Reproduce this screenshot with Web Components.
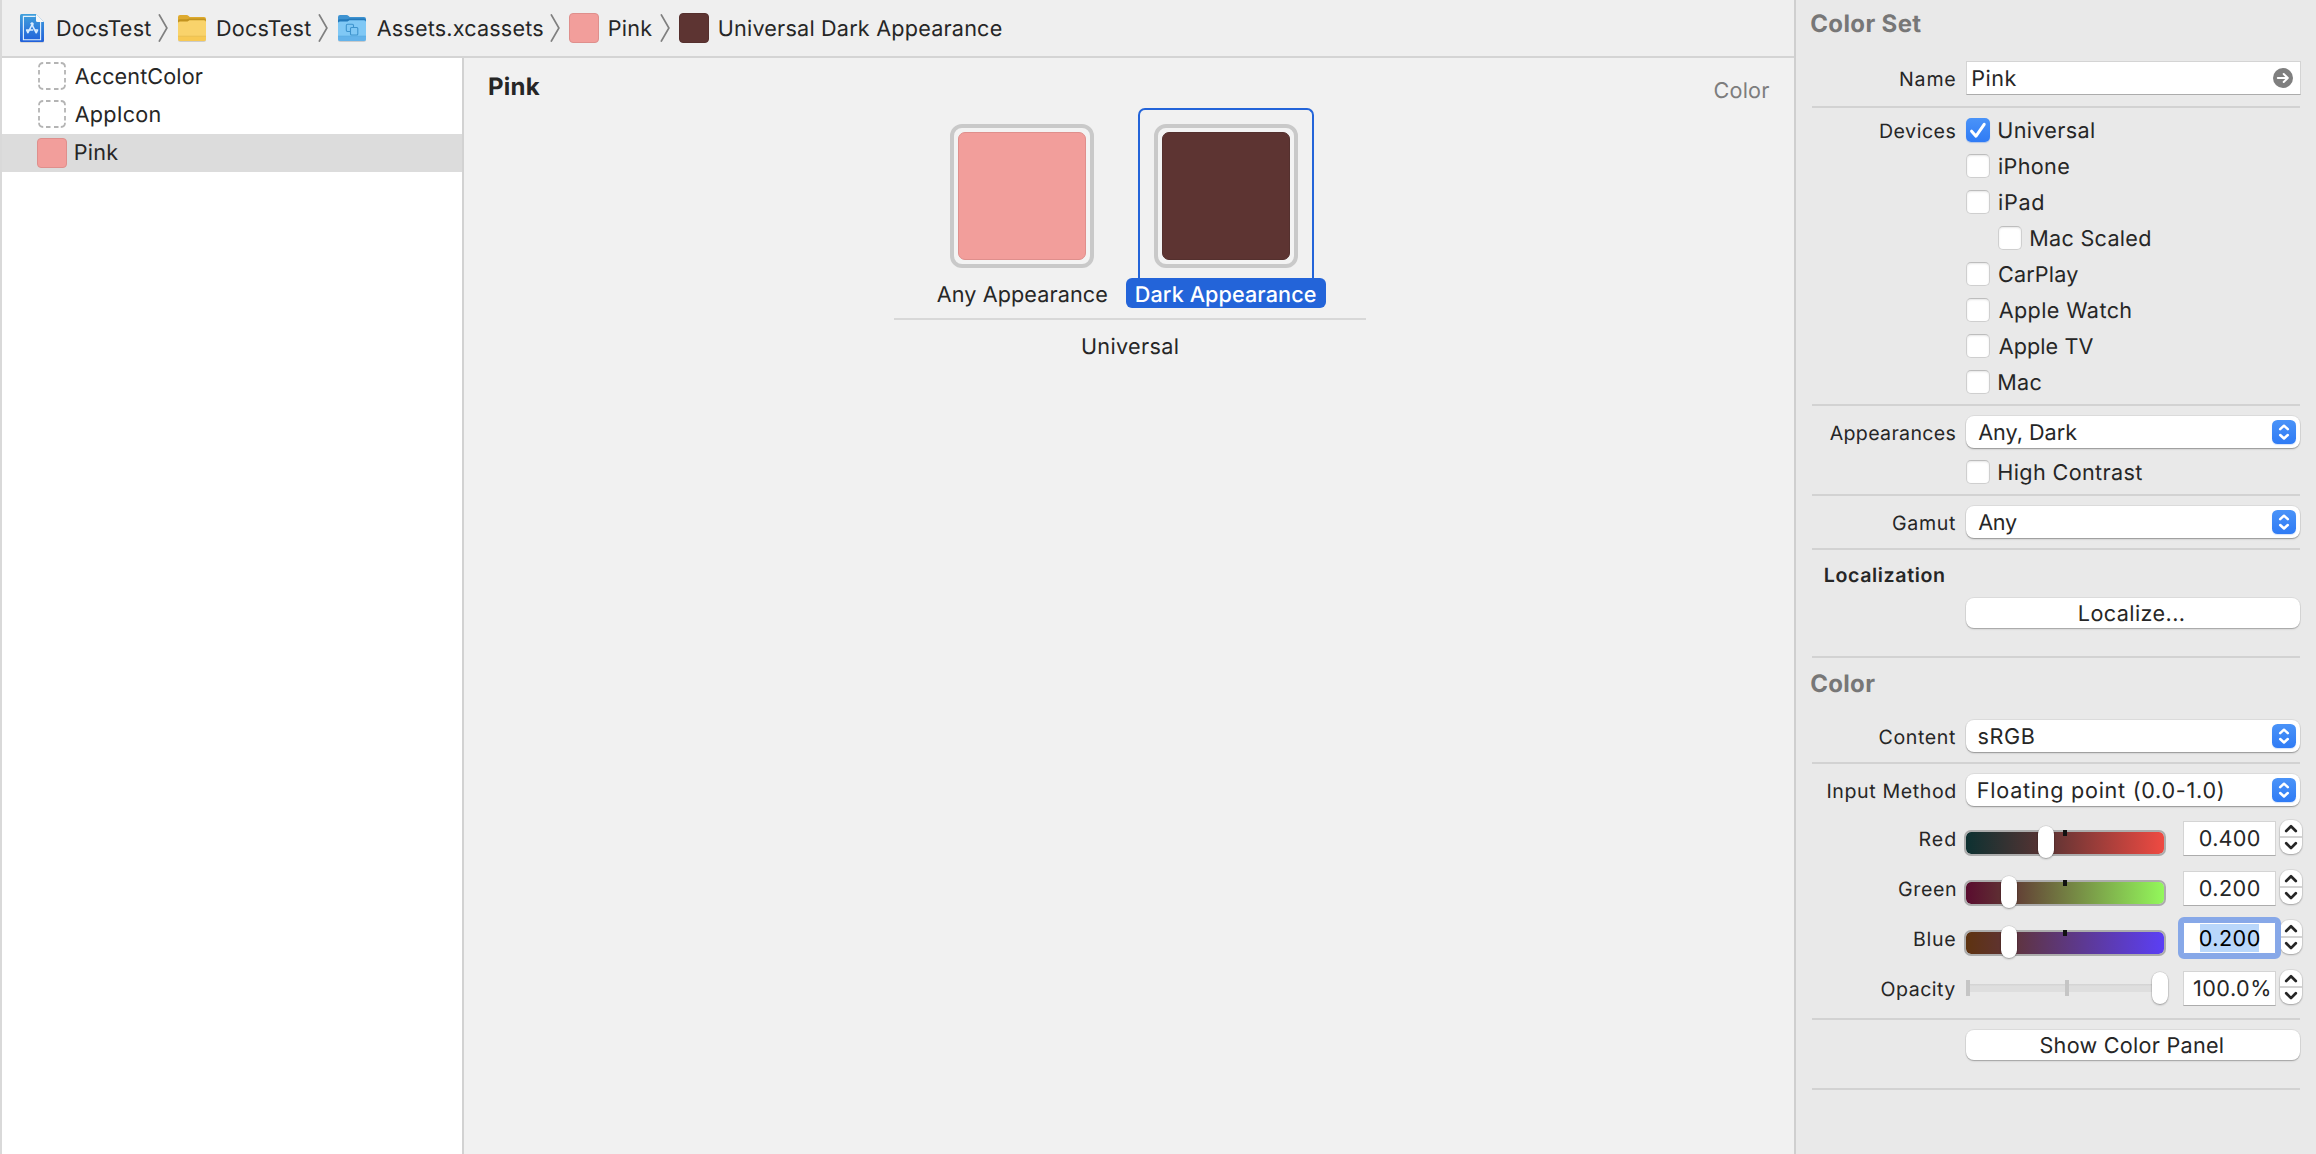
<!DOCTYPE html>
<html lang="en">
<head>
<meta charset="utf-8">
<title>Assets.xcassets</title>
<style>
  html, body { margin: 0; height: 100%; overflow: hidden; }
  body { font-family: Inter, "Liberation Sans", sans-serif; color: #262626; background: #f1f1f1; }
</style>
</head>
<body>
<asset-window></asset-window>
<script>
const define = (name, css, html, init) => {
  const template = document.createElement('template');
  template.innerHTML = `<style>:host{box-sizing:border-box}*{box-sizing:border-box}${css}</style>${html}`;
  customElements.define(name, class extends HTMLElement {
    connectedCallback() {
      if (this.shadowRoot) return;
      this.attachShadow({ mode: 'open' }).append(template.content.cloneNode(true));
      if (init) init(this, this.shadowRoot);
    }
  });
};

/* Text whose glyphs are tracked to fill the width w, side bearings excluded */
const ctx = document.createElement('canvas').getContext('2d');
ctx.textRendering = 'geometricPrecision';
define('ui-text', `
  :host { display: block; flex: none; white-space: nowrap; text-rendering: geometricPrecision; height: 24px; line-height: var(--lh, 26px); }
  span { display: inline-block; }`,
  `<span><slot></slot></span>`, (el, root) => {
    const text = el.textContent, size = el.getAttribute('size') || 21.6, weight = el.getAttribute('weight') || 400;
    const w = +el.getAttribute('w'), family = 'Inter, "Liberation Sans", sans-serif';
    ctx.font = `${weight} ${size * 20}px ${family}`;
    const big = ctx.measureText(text);
    const left = -big.actualBoundingBoxLeft / 20;
    const right = (big.width - big.actualBoundingBoxRight) / 20;
    ctx.font = `${weight} ${size}px ${family}`;
    const ink = ctx.measureText(text).width - left - right;
    if (el.hasAttribute('size')) el.style.lineHeight = '24px';
    el.style.width = w + 'px';
    el.style.fontSize = size + 'px';
    el.style.fontWeight = weight;
    el.style.letterSpacing = ((w - ink) / (text.length - 1)).toFixed(3) + 'px';
    root.querySelector('span').style.marginLeft = (-left).toFixed(2) + 'px';
  });

define('color-swatch', `
  :host { display: block; flex: none; width: 30px; height: 30px; border-radius: 4px; background: var(--c);
    border: 1px solid var(--e); }`, ``);

define('empty-slot', `:host { display: block; width: 28px; height: 28px; } svg { display: block; }`,
  `<svg width="28" height="28" fill="none" stroke="#b4b4b4" stroke-width="1.8">
    <path d="M1 5.2Q1 1 5.2 1M22.8 1Q27 1 27 5.2M27 22.8Q27 27 22.8 27M5.2 27Q1 27 1 22.8"/>
    <path d="M8 1h4.5M16 1h4.5M8 27h4.5M16 27h4.5M1 8v4.5M1 16v4.5M27 8v4.5M27 16v4.5"/></svg>`);

define('crumb-chevron', `:host { display: block; flex: none; width: 10px; height: 28px; } svg { display: block; }`,
  `<svg width="10" height="28" fill="none" stroke="#808080" stroke-width="1.7"><path d="M1 .3L8.9 14L1 27.7"/></svg>`);

define('project-icon', `:host { display: block; flex: none; width: 24px; height: 30px; } svg { display: block; overflow: visible; }`,
  `<svg width="24" height="30">
    <defs><linearGradient id="g" x2="0" y2="1"><stop stop-color="#40a0dc"/><stop offset="1" stop-color="#2160da"/></linearGradient></defs>
    <path d="M1.5 1H16L24 9V27.5Q24 29 22.5 29H1.5Q0 29 0 27.5V2.5Q0 1 1.5 1Z" fill="#999" opacity=".4" transform="translate(0 .8)"/>
    <path d="M1.5 1H16L24 9V27.5Q24 29 22.5 29H1.5Q0 29 0 27.5V2.5Q0 1 1.5 1Z" fill="url(#g)"/>
    <path d="M15.6 3.4H3.4V26.7H20.6V8.6" fill="none" stroke="#e4f1fb" stroke-width="1.1"/>
    <path d="M16 1L24 9H17.5Q16 9 16 7.5Z" fill="#f7f7f7"/>
    <g fill="none" stroke="#d9ecff" stroke-width="1.5" stroke-linecap="round" stroke-linejoin="round">
      <path d="M8 19.6L12.6 10.6M11 10.6Q12 9.2 13 10.6L12.6 12.8L16.2 19.8M6.6 17H12.6M15.4 17H17.6M6.6 17L7.8 19.6M17.6 17L16.4 19.8"/></g>
  </svg>`);

define('folder-icon', `:host { display: block; flex: none; width: 28px; height: 28px; } svg { display: block; overflow: visible; }
  .mark { display: none; } :host([assets]) .mark { display: inline; }`,
  `<svg width="28" height="28">
    <path d="M0 6H28V25.5Q28 28 25.5 28H2.5Q0 28 0 25.5Z" fill="#000" opacity=".15"/>
    <path d="M0 3Q0 1 2 1H8.5Q9.7 1 10.7 2L11.7 3H26Q28 3 28 5V12H0Z" style="fill:var(--tab)"/>
    <path d="M0 6.2Q.3 5.5 2 5.3H8.5Q10 5.3 11.2 4.6H26Q28 4.6 28 6.5V12H0Z" style="fill:var(--dark)"/>
    <path d="M0 9Q0 7.5 2 7.5H9.500L11.5 6.3H26Q28 6.3 28 8V25Q28 27 26 27H2Q0 27 0 25Z" style="fill:var(--body)"/>
    <path d="M0 22.5H28V25Q28 27 26 27H2Q0 27 0 25Z" style="fill:var(--foot)"/>
    <path d="M0 22.2H28" style="stroke:var(--line)" stroke-width=".7"/>
    <g class="mark" fill="none" stroke="#3d93cd" stroke-width="1.1"><path d="M12.5 17.5H9.5Q8.300 17.5 8.300 16.3V11.5Q8.300 10.3 9.500 10.3H14.300Q15.500 10.3 15.500 11.500V13.5"/><rect x="12.500" y="13.500" width="7.300" height="7.500" rx="1"/></g>
  </svg>`);

define('path-bar', `
  :host { display: flex; align-items: center; height: 58px; padding: 0 0 0 18px; background: #efefef; border-bottom: 2px solid #d4d4d4; }
  .y { --tab:#deaa2e; --dark:#c2931f; --body:#f9d36b; --foot:#f7c954; --line:#e3b84a; }
  .b { --tab:#3e93d1; --dark:#2379ba; --body:#80c8f5; --foot:#64b3ea; --line:#4ea3dc; }`,
  `<project-icon></project-icon>
   <ui-text w="93.3" style="margin-left:13.700px">DocsTest</ui-text>
   <crumb-chevron style="margin-left:7.300px"></crumb-chevron>
   <folder-icon class="y" style="margin-left:9.700px"></folder-icon>
   <ui-text w="93.3" style="margin-left:11.700px">DocsTest</ui-text>
   <crumb-chevron style="margin-left:7px"></crumb-chevron>
   <folder-icon class="b" assets style="margin-left:10px"></folder-icon>
   <ui-text w="165.7" style="margin-left:11px">Assets.xcassets</ui-text>
   <crumb-chevron style="margin-left:7.300px"></crumb-chevron>
   <color-swatch style="margin-left:9px;--c:#f29e9b;--e:#df8f8c"></color-swatch>
   <ui-text w="42.5" style="margin-left:10.500px">Pink</ui-text>
   <crumb-chevron style="margin-left:8.500px"></crumb-chevron>
   <color-swatch style="margin-left:8.500px;--c:#5d3432;--e:#552f2d"></color-swatch>
   <ui-text w="282" style="margin-left:10.500px">Universal Dark Appearance</ui-text>`);

define('asset-row', `
  :host { display: flex; align-items: center; height: 38px; --lh: 24px; }
  :host([selected]) { background: #dcdcdc; }
  .icon { width: 73px; flex: none; display: flex; padding-left: 36px; }`,
  `<div class="icon"><slot name="icon"></slot></div><slot></slot>`);

define('asset-list', `:host { display: block; flex: none; width: 462px; background: #fff; border-right: 2px solid #d2d2d2; }`,
  `<asset-row><empty-slot slot="icon" style="margin-top:-2px"></empty-slot><ui-text w="127.500">AccentColor</ui-text></asset-row>
   <asset-row><empty-slot slot="icon" style="margin-top:-2px"></empty-slot><ui-text w="84.500">AppIcon</ui-text></asset-row>
   <asset-row selected><color-swatch slot="icon" style="margin:-1px 0 0 -1px;--c:#f29e9b;--e:#df8f8c"></color-swatch><ui-text w="42.500" style="margin-left:.500px">Pink</ui-text></asset-row>`);

define('color-well', `
  :host { display: flex; flex-direction: column; align-items: center; width: 200px; }
  .frame { width: 176px; height: 170px; padding: 14px; border: 2px solid transparent; border-bottom: 0; border-radius: 7px 7px 0 0; }
  .well { width: 144px; height: 144px; border: 4px solid #c9c9c9; border-radius: 12px; padding: 4px; background: #f3f3f3; }
  .fill { height: 100%; border-radius: 7px; background: var(--c); border: 1px solid var(--e); }
  .name { width: 100%; height: 30px; display: flex; align-items: center; justify-content: center; border-radius: 6px; padding-top: 1px; }
  :host([selected]) .frame { border-color: #2364d9; }
  :host([selected]) .name { background: #2364d9; color: #fff; }`,
  `<div class="frame"><div class="well"><div class="fill"></div></div></div><div class="name"><slot></slot></div>`);

define('asset-canvas', `
  :host { display: block; flex: 1; background: #f1f1f1; padding: 17px 25px 0 25.5px; }
  header { display: flex; justify-content: space-between; height: 33px; }
  .set { width: 472px; margin-left: 404.5px; display: flex; flex-direction: column; align-items: center; }
  .wells { display: flex; gap: 4px; height: 210px; padding-right: 12px; }
  hr { width: 472px; height: 2px; border: 0; margin: 0 0 14px; background: #d8d8d8; }`,
  `<header><ui-text size="24" weight="700" w="50">Pink</ui-text><ui-text w="54.500" style="color:#7d7d7d;margin-top:3px">Color</ui-text></header>
   <div class="set"><div class="wells">
     <color-well style="--c:#f29e9b;--e:#df8f8c"><ui-text w="170">Any Appearance</ui-text></color-well>
     <color-well selected style="--c:#5d3432;--e:#54302e"><ui-text w="179" weight="500">Dark Appearance</ui-text></color-well>
   </div><hr><ui-text w="94.700">Universal</ui-text></div>`);

define('check-box', `
  :host { display: flex; align-items: center; height: 24px; }
  i { width: 24px; height: 24px; flex: none; border-radius: 5px; background: #fff; border: 1px solid #cfcfcf; border-top-color: #bdbdbd; box-shadow: inset 0 1px 2px rgba(0,0,0,.1); margin-right: 9px; }
  svg { display: none; }
  :host([checked]) i { border: 0; background: linear-gradient(#4a93f8,#2f7bf5); box-shadow: 0 1px 1px rgba(40,110,230,.3); }
  :host([checked]) svg { display: block; }`,
  `<i><svg width="24" height="24" fill="none" stroke="#fff" stroke-width="3" stroke-linecap="round" stroke-linejoin="round"><path d="M5.6 13.2L10 18.2L18.2 6.3"/></svg></i><slot></slot>`);

define('pop-up', `
  :host { display: flex; align-items: center; justify-content: space-between; width: 334px; height: 32px; padding: 0 4px 0 12.5px; border-radius: 8px; background: #fff;
    box-shadow: 0 0 0 1px rgba(0,0,0,.06), 0 1px 1px rgba(0,0,0,.25), 0 2px 2px rgba(0,0,0,.06); }
  i { width: 24px; height: 24px; border-radius: 5.5px; background: linear-gradient(#4a93f8,#2f7bf5); box-shadow: 0 1px 1px rgba(40,110,230,.2); }
  svg { display: block; }`,
  `<slot></slot><i><svg width="24" height="24" fill="none" stroke="#fff" stroke-width="2.5" stroke-linecap="round" stroke-linejoin="round"><path d="M8.2 9.2L12 5.7L15.800 9.2M8.2 15L12 18.5L15.8 15"/></svg></i>`);

define('push-button', `
  :host { display: flex; align-items: center; justify-content: center; width: 334px; height: 30px; padding-right: 3px; border-radius: 8px; background: #fff;
    box-shadow: 0 0 0 1px rgba(0,0,0,.06), 0 1px 1px rgba(0,0,0,.2), 0 2px 2px rgba(0,0,0,.05); }`, `<slot></slot>`);

define('text-field', `
  :host { display: flex; align-items: center; background: #fff; border: 1px solid #d4d4d4; border-bottom: 1.5px solid #acacac; height: 34px; }`,
  `<slot></slot>`);

define('step-per', `:host { display: block; flex: none; width: 22px; height: 34px; border-radius: 9px; background: #fff; box-shadow: 0 0 0 1px rgba(0,0,0,.06), 0 1px 2px rgba(0,0,0,.25); } svg { display: block; }`,
  `<svg width="22" height="34"><path d="M0 17H22" stroke="#d4d4d4" stroke-width="2"/><path d="M6.2 11L11 6.2L15.8 11M6.2 23.3L11 28.1L15.8 23.3" fill="none" stroke="#262626" stroke-width="2.7" stroke-linecap="round" stroke-linejoin="round"/></svg>`);

define('slide-bar', `
  :host { display: flow-root; flex: none; position: relative; width: 202px; height: 36px; margin-left: -2px; }
  .track { height: 26px; margin-top: 11px; border: 2px solid #acacac; border-radius: 7px; background: var(--g) padding-box; }
  b { position: absolute; left: 99px; top: 11px; width: 4px; height: 6px; background: #111; }
  .knob { position: absolute; left: var(--k); top: 7px; width: 16px; height: 32px; border-radius: 8px; background: #fff; box-shadow: 0 0 0 .5px rgba(0,0,0,.12), 0 1px 2px rgba(0,0,0,.3); }
  s { display: none; }
  :host([plain]) .track { height: 8px; margin: 15px 2px 0; border: 0; border-radius: 3px; background: linear-gradient(#d2d2d2,#dedede 30%); }
  :host([plain]) b { display: none; }
  :host([plain]) s { display: block; position: absolute; top: 11px; left: 2px; width: 4px; height: 16px; background: #c5c5c5; }
  :host([plain]) s + s { left: 101px; }
  :host([plain]) .knob { top: 3px; }`,
  `<div class="track"></div><b></b><s></s><s></s><div class="knob"></div>`);

define('form-row', `
  :host { display: flex; align-items: flex-start; }
  .label { width: 143px; margin-right: 11px; flex: none; display: flex; justify-content: flex-end; padding-top: var(--lt, 5px); }
  .body { display: flex; flex-direction: column; gap: 12px; }
  :host([inline]) .body { flex-direction: row; gap: 0; }
  :host([channel]) { height: 36px; margin-bottom: 14px; --lt: 8px; }`,
  `<div class="label"><slot name="label"></slot></div><div class="body"><slot></slot></div>`);

define('channel-row', `
  text-field { width: 93px; height: 35px; margin: 2px 4px 0 17px; justify-content: center; --lh: 24px; }
  :host { display: block; }
  :host([focused]) text-field { position: relative; box-shadow: 0 0 0 1px #87a8e8; outline: 5px solid #87a8e8; outline-offset: 0; border-radius: 1px; border: 1px solid #87a8e8; height: 32px; margin-top: 3px; z-index: 1; }
  :host([focused]) .v { background: #b9d7fb; color: #000; --lh: 26px; }
  .v { height: 28px; display: flex; align-items: center; }
  step-per { margin-top: 1px; }`,
  `<form-row inline channel><slot name="label" slot="label"></slot><slide-bar></slide-bar><text-field><div class="v"><slot></slot></div></text-field><step-per></step-per></form-row>`,
  (el, root) => { if (el.hasAttribute('plain')) root.querySelector('slide-bar').setAttribute('plain', ''); });

define('attributes-inspector', `
  :host { display: block; flex: none; width: 522px; border-left: 2px solid #cfcfcf; background: #e9e9e9; padding-left: 16px; }
  hr { width: 488px; height: 2px; border: 0; margin: 10px 0; background: #d2d2d2; }
  .title { color: #777; margin-left: -1px; }
  .go { margin-left: auto; margin-right: 7px; display: block; }`,
  `<ui-text class="title" size="24" weight="700" w="110" style="padding-top:12px;height:61px">Color Set</ui-text>
   <form-row style="--lt:6px"><ui-text slot="label" size="19.6" w="54.4">Name</ui-text>
     <text-field style="width:335px;padding-left:6px"><ui-text w="43.4">Pink</ui-text>
       <svg class="go" width="20" height="20"><circle cx="10" cy="10" r="10" fill="#7f7f7f"/><path d="M4.8 10H14.5M10.7 6L14.8 10L10.7 14" fill="none" stroke="#fff" stroke-width="2" stroke-linecap="round" stroke-linejoin="round"/></svg>
     </text-field></form-row>
   <hr style="margin-top:11px">
   <form-row style="--lt:1px"><ui-text slot="label" size="19.6" w="74.6">Devices</ui-text>
     <check-box checked><ui-text w="94.600">Universal</ui-text></check-box>
     <check-box><ui-text w="70">iPhone</ui-text></check-box>
     <check-box><ui-text w="44">iPad</ui-text></check-box>
     <check-box style="margin-left:32px"><ui-text w="119">Mac Scaled</ui-text></check-box>
     <check-box><ui-text w="79">CarPlay</ui-text></check-box>
     <check-box><ui-text w="131.500">Apple Watch</ui-text></check-box>
     <check-box><ui-text w="94">Apple TV</ui-text></check-box>
     <check-box><ui-text w="42">Mac</ui-text></check-box></form-row>
   <hr>
   <form-row><ui-text slot="label" size="19.6" w="125">Appearances</ui-text>
     <pop-up><ui-text w="98.500">Any, Dark</ui-text></pop-up>
     <check-box><ui-text w="143">High Contrast</ui-text></check-box></form-row>
   <hr>
   <form-row><ui-text slot="label" size="19.6" w="62">Gamut</ui-text><pop-up><ui-text w="38.300">Any</ui-text></pop-up></form-row>
   <hr>
   <ui-text size="19.6" weight="600" w="118.700" style="margin:13px 0 11px 13px">Localization</ui-text>
   <form-row><push-button><ui-text w="104">Localize...</ui-text></push-button></form-row>
   <hr style="margin:28px 0 14px">
   <ui-text class="title" size="24" weight="700" w="63.500" style="margin-bottom:24px">Color</ui-text>
   <form-row><ui-text slot="label" size="19.6" w="75.500">Content</ui-text><pop-up><ui-text w="55.500">sRGB</ui-text></pop-up></form-row>
   <hr>
   <form-row style="margin-bottom:13px"><ui-text slot="label" size="19.6" w="127">Input Method</ui-text><pop-up><ui-text w="244">Floating point (0.0-1.0)</ui-text></pop-up></form-row>
   <channel-row style="--k:74px;--g:linear-gradient(90deg,#0d3131,#5a3333 40%,#ef4a42)"><ui-text slot="label" size="19.6" w="35">Red</ui-text><ui-text w="59.300">0.400</ui-text></channel-row>
   <channel-row style="--k:37px;--g:linear-gradient(90deg,#5a0c2f,#5f3333 20%,#93f85b)"><ui-text slot="label" size="19.6" w="56">Green</ui-text><ui-text w="59.300">0.200</ui-text></channel-row>
   <channel-row focused style="--k:37px;--g:linear-gradient(90deg,#5e3310,#5f3333 20%,#5b3ff5)"><ui-text slot="label" size="19.6" w="40.500">Blue</ui-text><ui-text w="59.300">0.200</ui-text></channel-row>
   <channel-row plain style="--k:187.500px"><ui-text slot="label" size="19.6" w="73.500">Opacity</ui-text><ui-text w="75.200" style="margin-left:4px">100.0%</ui-text></channel-row>
   <hr style="margin-top:-1px">
   <form-row><push-button><ui-text w="182">Show Color Panel</ui-text></push-button></form-row>
   <hr style="margin-top:28px">`);

define('asset-window', `
  :host { display: flex; height: 100vh; overflow: hidden; border-left: 2px solid #d9d9d9; }
  main { flex: 1; min-width: 0; display: flex; flex-direction: column; }
  .split { flex: 1; display: flex; min-height: 0; }`,
  `<main><path-bar></path-bar><div class="split"><asset-list></asset-list><asset-canvas></asset-canvas></div></main><attributes-inspector></attributes-inspector>`);
</script>
</body>
</html>
